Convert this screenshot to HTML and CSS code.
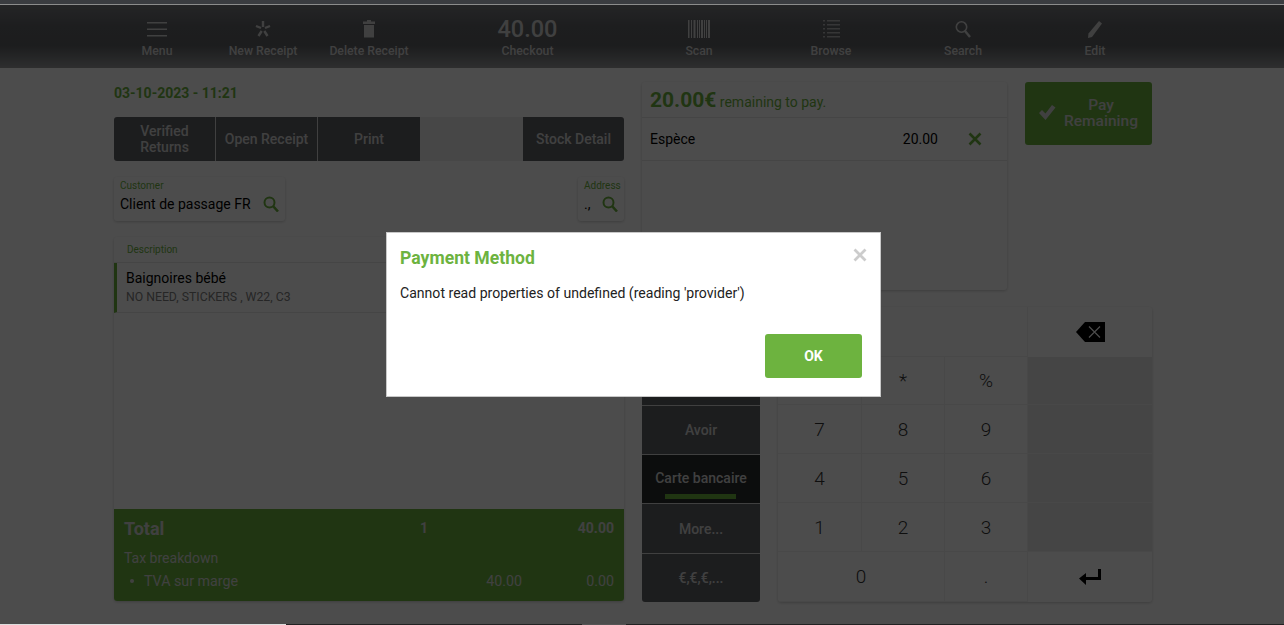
FILE: index.html
```html
<!DOCTYPE html>
<html>
<head>
  <meta charset="utf-8">
  <title>Point of Sale</title>
  <link rel="stylesheet" href="styles.css">
</head>
<body>
  <div class="top-strip"></div>

  <header class="toolbar">
    <div class="toolbar-inner">
      <div class="tool">
        <svg class="tool-icon" width="20" height="18" viewBox="0 0 20 18"><path d="M0 2h20v1.500H0zM0 8.500h20V10H0zM0 15h20v1.500H0z" fill="currentColor"/></svg>
        <span>Menu</span>
      </div>
      <div class="tool">
        <svg class="tool-icon" width="16" height="18" viewBox="0 0 16 18"><path d="M8 1v6M1 6l5 2M15 6l-5 2M3.500 16l3.200-5M12.500 16l-3.200-5" stroke="currentColor" stroke-width="2.400" fill="none"/></svg>
        <span>New Receipt</span>
      </div>
      <div class="tool">
        <svg class="tool-icon" width="12" height="18" viewBox="0 0 12 18"><path d="M4 0h4v1.500h4V4H0V1.500h4zM1 5h10v12.500H1z" fill="currentColor"/></svg>
        <span>Delete Receipt</span>
      </div>
      <div class="tool tool-total">
        <strong>40.00</strong>
        <span>Checkout</span>
      </div>
      <div class="tool">
        <svg class="tool-icon" width="22" height="18" viewBox="0 0 22 18"><path d="M0 0h1.500v18H0zM3 0h1v18H3zM5.500 0h2v18h-2zM9 0h1v18H9zM11 0h1v18h-1zM13 0h2v18h-2zM16 0h1v18h-1zM18 0h1v18h-1zM20 0h2v18h-2z" fill="currentColor"/></svg>
        <span>Scan</span>
      </div>
      <div class="tool">
        <svg class="tool-icon tool-icon-dim" width="17" height="18" viewBox="0 0 17 18"><path d="M0 0h2v1.500H0zM4 0h13v1.500H4zM0 4h2v1.500H0zM4 4h13v1.500H4zM0 8h2v1.500H0zM4 8h13v1.500H4zM0 12h2v1.500H0zM4 12h13v1.500H4zM0 16h2v1.500H0zM4 16h13v1.500H4z" fill="currentColor"/></svg>
        <span>Browse</span>
      </div>
      <div class="tool">
        <svg class="tool-icon" width="16" height="18" viewBox="0 0 16 18"><circle cx="6.500" cy="7" r="5.200" stroke="currentColor" stroke-width="1.600" fill="none"/><path d="M10 11l5 6" stroke="currentColor" stroke-width="2.400"/></svg>
        <span>Search</span>
      </div>
      <div class="tool">
        <svg class="tool-icon" width="16" height="18" viewBox="0 0 16 18"><path d="M12 1l3 2.500L5 17l-4 1 .5-4.500z" fill="currentColor"/></svg>
        <span>Edit</span>
      </div>
    </div>
  </header>

  <main class="screen">
    <section class="receipt">
      <div class="receipt-date">03-10-2023 - 11:21</div>

      <div class="actions">
        <div class="action">Verified<br>Returns</div>
        <div class="action">Open Receipt</div>
        <div class="action">Print</div>
        <div class="action action-empty"></div>
        <div class="action">Stock Detail</div>
      </div>

      <div class="lookups">
        <div class="lookup">
          <label>Customer</label>
          <div class="lookup-value">
            <span>Client de passage FR</span>
            <svg class="lookup-icon" width="16" height="16" viewBox="0 0 16 16"><circle cx="6.500" cy="6.500" r="5" stroke="currentColor" stroke-width="2" fill="none"/><path d="M10 10l5 5.500" stroke="currentColor" stroke-width="2.600"/></svg>
          </div>
        </div>
        <div class="lookup lookup-small">
          <label>Address</label>
          <div class="lookup-value">
            <span>.,</span>
            <svg class="lookup-icon" width="16" height="16" viewBox="0 0 16 16"><circle cx="6.500" cy="6.500" r="5" stroke="currentColor" stroke-width="2" fill="none"/><path d="M10 10l5 5.500" stroke="currentColor" stroke-width="2.600"/></svg>
          </div>
        </div>
      </div>

      <div class="lines">
        <div class="lines-head">Description</div>
        <div class="line">
          <div class="line-name">Baignoires bébé</div>
          <div class="line-note">NO NEED, STICKERS , W22, C3</div>
        </div>
        <div class="totals">
          <div class="totals-row">
            <span class="totals-title">Total</span>
            <span class="totals-qty">1</span>
            <span class="totals-sum">40.00</span>
          </div>
          <div class="tax-title">Tax breakdown</div>
          <div class="tax-row">
            <span class="tax-dot"></span>
            <span class="tax-name">TVA sur marge</span>
            <span class="tax-base">40.00</span>
            <span class="tax-amount">0.00</span>
          </div>
        </div>
      </div>
    </section>

    <section class="payment">
      <div class="payment-top">
        <div class="paid">
          <div class="paid-head"><strong>20.00€</strong> remaining to pay.</div>
          <div class="paid-row">
            <span class="paid-name">Espèce</span>
            <span class="paid-sum">20.00</span>
            <svg class="paid-remove" width="14" height="14" viewBox="0 0 14 14"><path d="M1.500 1.500l11 11M12.500 1.500l-11 11" stroke="currentColor" stroke-width="2.600"/></svg>
          </div>
        </div>
        <div class="pay-btn">
          <svg width="18" height="17" viewBox="0 0 18 17"><path d="M1 9l3-3 3.500 3.500L14 1l3.500 2.500L7.500 16z" fill="currentColor"/></svg>
          <span>Pay<br>Remaining</span>
        </div>
      </div>

      <div class="payment-bottom">
        <div class="methods">
          <div class="method">Espèce</div>
          <div class="method">Chèque</div>
          <div class="method">Avoir</div>
          <div class="method method-active">Carte bancaire</div>
          <div class="method">More...</div>
          <div class="method">€,€,€,...</div>
        </div>

        <div class="keypad">
          <div class="key key-display"></div>
          <div class="key key-side">
            <svg width="29" height="20" viewBox="0 0 29 20"><path d="M9 0h20v20H9L0 10z" fill="#000"/><path d="M13 4.500l11 11M24 4.500l-11 11" stroke="#fff" stroke-width="1.200"/></svg>
          </div>
          <div class="key"></div>
          <div class="key">*</div>
          <div class="key">%</div>
          <div class="key key-dark"></div>
          <div class="key">7</div>
          <div class="key">8</div>
          <div class="key">9</div>
          <div class="key key-dark"></div>
          <div class="key">4</div>
          <div class="key">5</div>
          <div class="key">6</div>
          <div class="key key-dark"></div>
          <div class="key">1</div>
          <div class="key">2</div>
          <div class="key">3</div>
          <div class="key key-dark"></div>
          <div class="key key-zero">0</div>
          <div class="key">.</div>
          <div class="key key-side">
            <svg width="22" height="16" viewBox="0 0 22 16"><path d="M19 0h3v11H7v5L0 9.500 7 4v4h12z" fill="#000"/></svg>
          </div>
        </div>
      </div>
    </section>
  </main>

  <div class="bottom-strip">
    <div class="strip-light"></div>
    <div class="strip-dark"></div>
    <div class="strip-mid"></div>
    <div class="strip-rest"></div>
  </div>

  <div class="backdrop"></div>

  <div class="dialog">
    <button class="dialog-close">
      <svg width="14" height="14" viewBox="0 0 14 14"><path d="M1.500 1.500l11 11M12.500 1.500l-11 11" stroke="currentColor" stroke-width="2.800"/></svg>
    </button>
    <h2>Payment Method</h2>
    <p>Cannot read properties of undefined (reading 'provider')</p>
    <div class="dialog-foot">
      <button class="dialog-ok">OK</button>
    </div>
  </div>
</body>
</html>
```

FILE: styles.css
```css
* {
  box-sizing: border-box;
}
html, body {
  height: 100%;
}
body {
  margin: 0;
  height: 625px;
  overflow: hidden;
  background: #fff;
  font-family: Roboto, "Liberation Sans", sans-serif;
  font-size: 14px;
  color: #000;
}
.top-strip {
  position: relative;
  z-index: 2;
  height: 5px;
  background: #3a3c40;
  border-bottom: 1px solid #8c8c8c;
}

/* toolbar */
.toolbar {
  height: 63px;
  background: linear-gradient(#7a7c80, #626468 35%, #606266 65%, #9a9b9d);
  color: #d8d8d8;
}
.toolbar-inner {
  display: grid;
  grid-template-columns: 106px 106px 106px 211px 132px 132px 132px 132px;
  margin-left: 104px;
}
.tool {
  display: flex;
  flex-direction: column;
  align-items: center;
  padding-top: 15px;
  font-size: 12.250px;
  font-weight: 500;
  line-height: 14px;
}
.tool-icon {
  display: block;
  margin-bottom: 6px;
}
.tool-icon-dim {
  opacity: .7;
}
.tool-total {
  padding-top: 9px;
}
.tool-total strong {
  font-size: 23.500px;
  line-height: 30px;
  font-weight: 500;
}

/* main area */
.screen {
  display: flex;
  gap: 18px;
  height: 556px;
  padding: 14px 0 0 114px;
}
.receipt {
  width: 510px;
}
.receipt-date {
  height: 35px;
  padding-top: 3px;
  font-size: 14px;
  font-weight: 700;
  line-height: 16px;
  color: #6db33f;
}
.actions {
  display: grid;
  grid-template-columns: 102px 102px 102px 103px 101px;
  height: 44px;
  border-radius: 3px;
  overflow: hidden;
  margin-bottom: 16px;
}
.action {
  display: flex;
  align-items: center;
  justify-content: center;
  text-align: center;
  background: #606367;
  color: #d8d8d8;
  font-weight: 500;
  line-height: 16px;
  border-right: 1px solid #d8d8d8;
}
.action:nth-child(3),
.action:last-child,
.action-empty {
  border-right: 0;
}
.action-empty {
  background: #eee;
}
.lookups {
  display: flex;
  justify-content: space-between;
  margin-bottom: 16px;
}
.lookup {
  width: 171px;
  height: 44px;
  padding: 4px 6px;
  background: #fff;
  border-radius: 3px;
  box-shadow: 0 1px 3px rgba(0,0,0,.2);
}
.lookup-small {
  width: 46px;
}
.lookup label {
  display: block;
  font-size: 10px;
  line-height: 10px;
  color: #6db33f;
  white-space: nowrap;
}
.lookup-small label {
  text-align: right;
  margin-right: -2px;
}
.lookup-value {
  display: flex;
  align-items: center;
  justify-content: space-between;
  height: 26px;
  font-size: 14px;
  white-space: nowrap;
}
.lookup-icon {
  color: #6db33f;
}
.lines {
  display: flex;
  flex-direction: column;
  height: 364px;
  background: #fff;
  border-radius: 3px;
  box-shadow: 0 1px 3px rgba(0,0,0,.2);
  overflow: hidden;
}
.lines-head {
  height: 26px;
  padding: 7px 0 0 13px;
  font-size: 10px;
  line-height: 12px;
  color: #6db33f;
  border-bottom: 1px solid #e6e6e6;
}
.line {
  height: 50px;
  padding: 6px 0 0 9px;
  border-left: 3px solid #6db33f;
  border-bottom: 1px solid #e6e6e6;
}
.line-name {
  font-size: 14px;
  line-height: 18px;
}
.line-note {
  margin-top: 3px;
  font-size: 12.250px;
  line-height: 14px;
  color: #808080;
}
.totals {
  margin-top: auto;
  height: 92px;
  padding: 7px 10px 0;
  background: #6db33f;
  color: #d8d8d8;
}
.totals-row {
  display: flex;
  align-items: center;
  height: 24px;
  font-weight: 700;
}
.totals-title {
  width: 296px;
  font-size: 18px;
}
.totals-qty {
  font-size: 14px;
}
.totals-sum {
  margin-left: auto;
  font-size: 14px;
}
.tax-title {
  margin-top: 10px;
  font-size: 14px;
  line-height: 16px;
}
.tax-row {
  display: flex;
  align-items: center;
  height: 16px;
  margin-top: 7px;
  font-size: 14.250px;
}
.tax-dot {
  width: 4px;
  height: 4px;
  margin: 0 10px 0 6px;
  border-radius: 50%;
  background: #d8d8d8;
}
.tax-name {
  flex: 1;
}
.tax-base {
  width: 60px;
  text-align: right;
}
.tax-amount {
  width: 92px;
  text-align: right;
}

/* payment side */
.payment {
  width: 510px;
}
.payment-top {
  display: flex;
  gap: 18px;
  height: 208px;
  margin-bottom: 17px;
}
.paid {
  width: 365px;
  background: #fff;
  border-radius: 3px;
  box-shadow: 0 1px 3px rgba(0,0,0,.2);
}
.paid-head {
  height: 36px;
  padding: 0 8px;
  font-size: 14px;
  line-height: 36px;
  color: #6db33f;
  border-bottom: 1px solid #e6e6e6;
}
.paid-head strong {
  font-size: 21px;
}
.paid-row {
  display: flex;
  align-items: center;
  height: 43px;
  padding-left: 8px;
  border-bottom: 1px solid #e6e6e6;
}
.paid-name {
  flex: 1;
}
.paid-remove {
  margin: 0 25px 0 30px;
  color: #6db33f;
}
.pay-btn {
  display: flex;
  align-items: center;
  width: 127px;
  height: 63px;
  padding: 0 0 2px 13px;
  background: #6db33f;
  color: #d8d8d8;
  border-radius: 3px;
  font-size: 15.500px;
  font-weight: 500;
  line-height: 16px;
}
.pay-btn span {
  flex: 1;
  text-align: center;
  padding-right: 6px;
}
.payment-bottom {
  display: flex;
  gap: 18px;
}
.methods {
  display: grid;
  grid-template-rows: 49px 49px 49px 49px 50px 48px;
  width: 118px;
  height: 295px;
  background: #606367;
  border-radius: 3px;
  overflow: hidden;
}
.method {
  display: flex;
  align-items: center;
  justify-content: center;
  color: #d8d8d8;
  font-weight: 500;
  font-size: 14px;
  border-top: 1px solid #d8d8d8;
}
.method:first-child {
  border-top: 0;
}
.method-active {
  position: relative;
  background: #2a2c2e;
  padding-bottom: 2px;
}
.method-active::after {
  content: "";
  position: absolute;
  left: 23px;
  right: 24px;
  bottom: 4px;
  height: 5px;
  background: #6db33f;
}
.keypad {
  display: grid;
  grid-template-columns: 84px 83px 83px 124px;
  grid-template-rows: 50px 48px 49px 49px 49px 50px;
  width: 374px;
  height: 295px;
  background: #fff;
  border-radius: 3px;
  box-shadow: 0 1px 3px rgba(0,0,0,.2);
  overflow: hidden;
}
.key {
  display: flex;
  align-items: center;
  justify-content: center;
  font-size: 19px;
  font-weight: 300;
  color: #333;
  border-right: 1px solid #f0f0f0;
  border-bottom: 1px solid #f0f0f0;
}
.key-display {
  grid-column: span 3;
}
.key-side {
  border-right: 0;
  border-bottom: 0;
}
.key-dark {
  background: #e6e6e6;
  border-right: 0;
}
.key-zero {
  grid-column: span 2;
}

.bottom-strip {
  position: fixed;
  left: 0;
  right: 0;
  bottom: 0;
  display: flex;
  height: 1px;
}
.strip-light {
  width: 286px;
  background: #ddd;
}
.strip-dark {
  width: 296px;
  background: #222;
}
.strip-mid {
  width: 44px;
  background: #555;
}
.strip-rest {
  flex: 1;
  background: #222;
}

/* dialog */
.backdrop {
  position: fixed;
  top: 0;
  left: 0;
  right: 0;
  bottom: 1px;
  background: rgba(0,0,0,.7);
}
.dialog {
  position: fixed;
  top: 232px;
  left: 386px;
  width: 495px;
  height: 165px;
  padding: 14px 13px 0;
  background: #fff;
  border: 1px solid #c8c8c8;
}
.dialog h2 {
  margin: 0;
  font-size: 17.600px;
  line-height: 22px;
  font-weight: 700;
  color: #6db33f;
}
.dialog p {
  margin: 15px 0 0;
  font-size: 14.080px;
  line-height: 18px;
  color: #222;
}
.dialog-close {
  position: absolute;
  top: 15px;
  right: 13px;
  padding: 0;
  border: 0;
  background: none;
  color: #ccc;
  line-height: 0;
}
.dialog-foot {
  display: flex;
  justify-content: flex-end;
  margin-top: 32px;
  padding-right: 5px;
}
.dialog-ok {
  width: 97px;
  height: 44px;
  border: 0;
  border-radius: 3px;
  background: #6db33f;
  color: #fff;
  font-family: inherit;
  font-size: 14px;
  font-weight: 700;
}
```
